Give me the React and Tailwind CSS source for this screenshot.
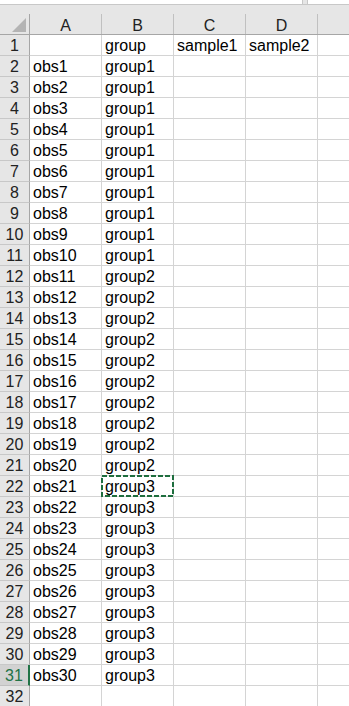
import React from "react";

const COLS = ["A", "B", "C", "D"];

function rowData(n) {
  if (n === 1) return ["", "group", "sample1", "sample2"];
  if (n >= 2 && n <= 31) {
    const i = n - 1;
    const g = i <= 10 ? "group1" : i <= 20 ? "group2" : "group3";
    return ["obs" + i, g, "", ""];
  }
  return ["", "", "", ""];
}

export default function App() {
  const rows = Array.from({ length: 32 }, (_, i) => i + 1);
  return (
    <div
      className="w-[349px] h-[706px] overflow-hidden bg-white text-black"
      style={{ fontFamily: '"Liberation Sans", Arial, sans-serif' }}
    >
      {/* top strip */}
      <div className="flex h-[5px] border-b border-[#c8c8c8] bg-[#e6e6e6]">
        <div className="w-[303px] h-full bg-white border-r border-[#c8c8c8]" />
        <div className="w-[4px]" />
        <div className="flex-1 h-full bg-white border-l border-[#c8c8c8]" />
      </div>
      {/* header area */}
      <div className="bg-[#e6e6e6] h-[30px] flex flex-col border-b border-[#a6a6a6]">
        <div className="h-[9px]" />
        <div className="flex h-[20px]">
          <div className="w-[30px] h-full border-r border-[#a6a6a6] relative">
            <svg className="absolute left-[12px] top-[4px]" width="15" height="15" viewBox="0 0 15 15">
              <polygon points="14,0 14,14 0,14" fill="#b4b4b4" />
            </svg>
          </div>
          {COLS.map((c) => (
            <div
              key={c}
              className="w-[72px] h-full border-r border-[#c0c0c0] flex items-end justify-center text-[16px] leading-[16px] text-[#222]"
            >
              <span>{c}</span>
            </div>
          ))}
          <div className="flex-1 h-full" />
        </div>
      </div>
      {/* rows */}
      {rows.map((n) => {
        const data = rowData(n);
        const active = n === 31;
        return (
          <div key={n} className="flex h-[21px]">
            <div
              className={
                "w-[30px] h-full border-b flex items-end justify-center text-[16px] leading-[16px] " +
                (active
                  ? "bg-[#d2d2d2] border-b-[#c0c0c0] text-[#217346] border-r-2 border-r-[#217346]"
                  : "bg-[#e6e6e6] border-b-[#c8c8c8] text-[#222] border-r border-r-[#a6a6a6]")
              }
            >
              <span className="pb-[1px]">{n}</span>
            </div>
            {data.map((v, ci) => (
              <div
                key={ci}
                className="w-[72px] h-full border-r border-b border-[#d4d4d4] flex items-end pl-[3px] text-[16px] leading-[16px] whitespace-nowrap relative"
              >
                <span className="pb-[1px]">{v}</span>
                {n === 22 && ci === 1 && (
                  <svg className="absolute left-[-1px] top-[-1px]" width="73" height="22" viewBox="0 0 73 22">
                    <rect x="1" y="1" width="71" height="20" fill="none" stroke="#1e6e3e" strokeWidth="2" strokeDasharray="5 2" />
                  </svg>
                )}
              </div>
            ))}
            <div className="flex-1 h-full border-b border-[#d4d4d4]" />
          </div>
        );
      })}
    </div>
  );
}
